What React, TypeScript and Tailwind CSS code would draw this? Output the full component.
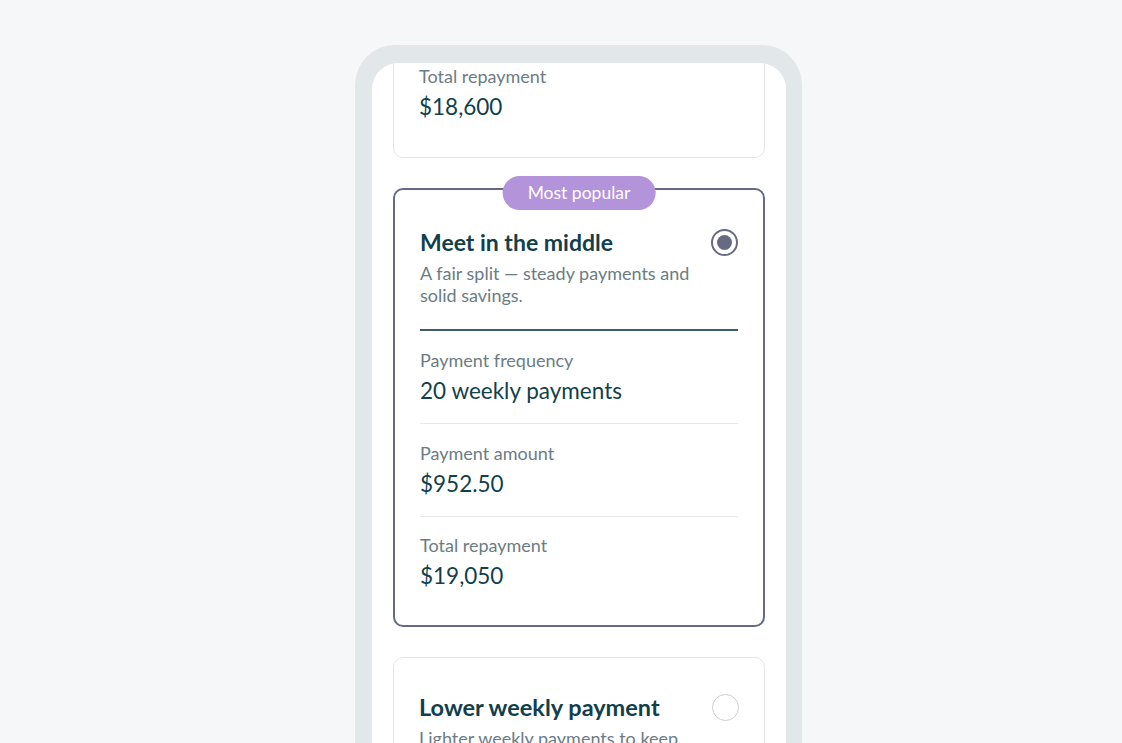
import React from 'react';

const FONT = { fontFamily: 'Lato, "Noto Sans", sans-serif' };

function Radio({ checked }: { checked?: boolean }) {
  return checked ? (
    <span className="flex h-[27px] w-[27px] shrink-0 items-center justify-center rounded-full border-2 border-[#676a85]">
      <span className="h-[15px] w-[15px] rounded-full bg-[#676a85]" />
    </span>
  ) : (
    <span className="h-[27px] w-[27px] shrink-0 rounded-full border-[1.5px] border-[#c9cfd3]" />
  );
}

function Row({ label, value, last }: { label: string; value: string; last?: boolean }) {
  return (
    <div className={last ? 'pt-[16px] pb-[35px]' : 'border-b border-[#e6e9eb] pt-[17px] pb-[18px]'}>
      <div className="text-[18px] leading-[24px] text-[#6b7c83]">{label}</div>
      <div className="mt-[5px] text-[22.5px] leading-[28px] text-[#113f4c]">{value}</div>
    </div>
  );
}

export default function App() {
  return (
    <div className="flex h-[743px] justify-center overflow-hidden bg-[#f5f7f9] pl-[35px] pt-[45px]" style={FONT}>
      <div className="flex h-[760px] w-[447px] flex-col rounded-[40px] bg-[#e2e7ea] pl-[17px] pr-[16px] pt-[18px]">
        <div className="flex flex-1 flex-col gap-[30px] overflow-hidden rounded-t-[26px] bg-white px-[21px]">
          {/* card scrolled partly out of view */}
          <div className="-mt-[12px] rounded-[10px] border border-[#e3e6e8] px-[25px] pt-[12px] pb-[36px]">
            <div className="text-[18px] leading-[24px] text-[#6b7c83]">Total repayment</div>
            <div className="mt-[5px] text-[22.5px] leading-[28px] text-[#113f4c]">$18,600</div>
          </div>

          <div className="relative rounded-[10px] border-2 border-[#676a85] px-[25px] pt-[38px]">
            <div className="absolute -top-[14px] left-1/2 flex h-[34px] -translate-x-1/2 items-center whitespace-nowrap rounded-full bg-[#b393d9] px-[25px] text-[17.5px] text-white">
              Most popular
            </div>
            <div className="flex items-center justify-between">
              <div className="text-[23px] font-bold leading-[28px] text-[#113f4c]">Meet in the middle</div>
              <Radio checked />
            </div>
            <p className="mt-[6px] pr-[30px] text-[18px] leading-[22px] text-[#6b7c83]">
              A fair split — steady payments and solid savings.
            </p>
            <div className="mt-[23px] h-[2px] bg-[#3f5d68]" />
            <Row label="Payment frequency" value="20 weekly payments" />
            <Row label="Payment amount" value="$952.50" />
            <Row label="Total repayment" value="$19,050" last />
          </div>

          <div className="rounded-[10px] border border-[#e3e6e8] px-[25px] pt-[35px] pb-[36px]">
            <div className="flex items-center justify-between">
              <div className="text-[23.5px] font-bold leading-[28px] text-[#113f4c]">Lower weekly payment</div>
              <Radio />
            </div>
            <p className="mt-[6px] pr-[30px] text-[18px] leading-[22px] text-[#6b7c83]">
              Lighter weekly payments to keep more cash on hand.
            </p>
          </div>
        </div>
      </div>
    </div>
  );
}
